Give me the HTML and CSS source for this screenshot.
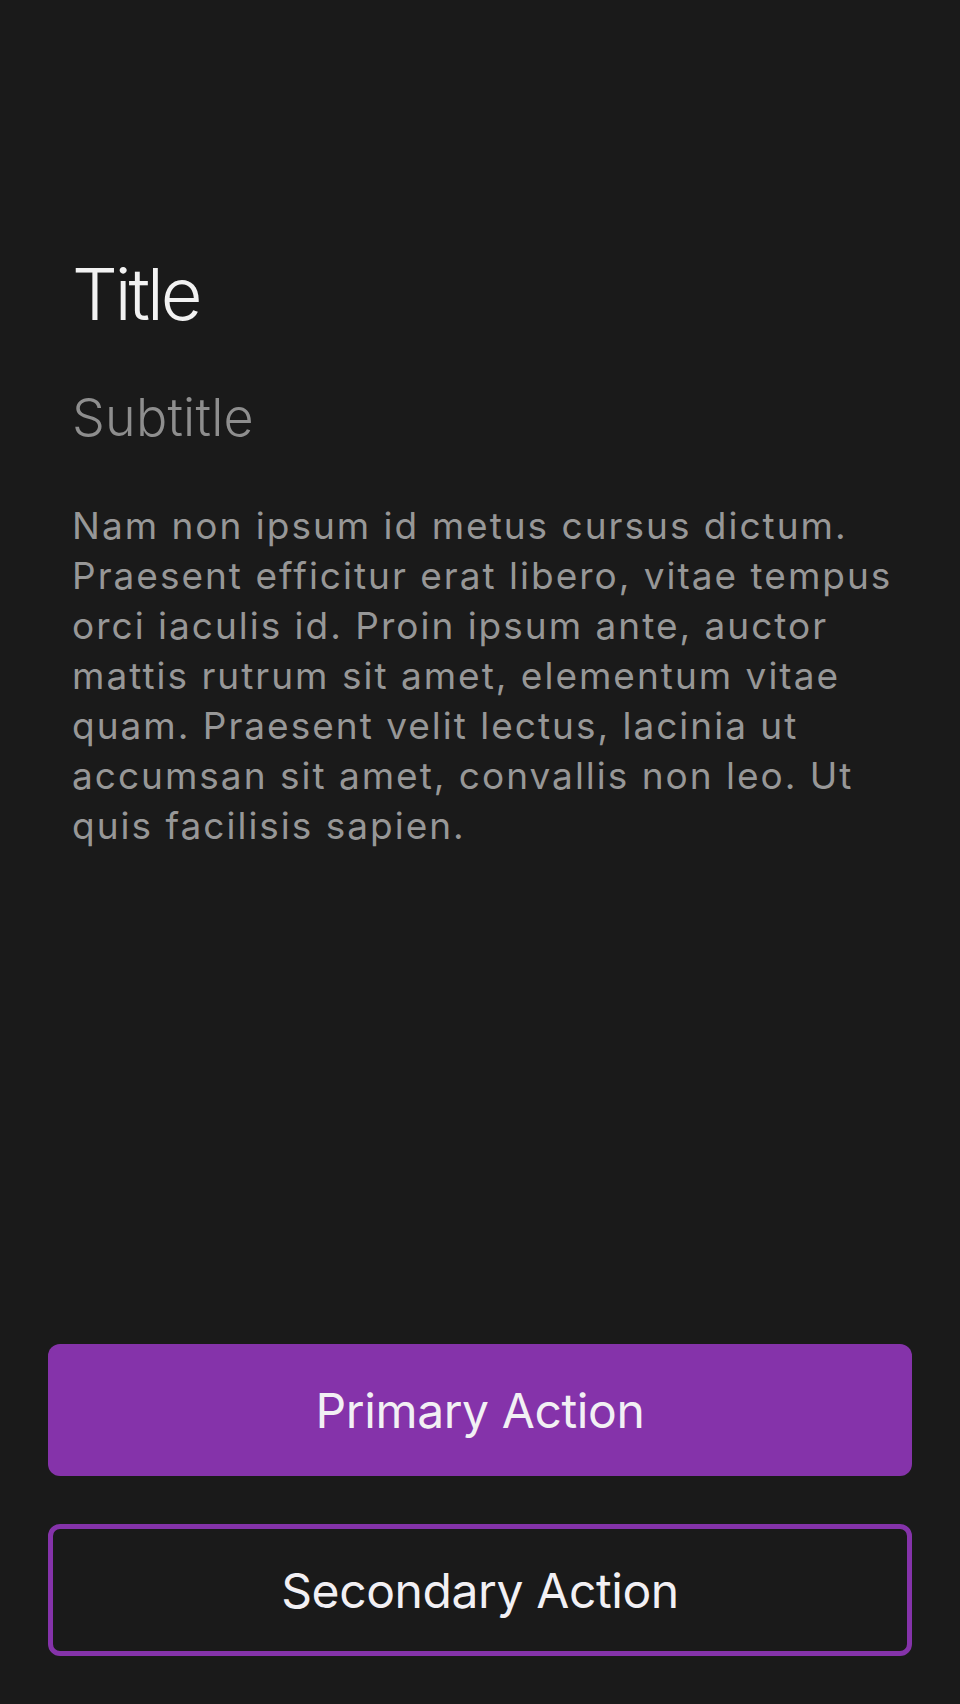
FILE: index.html
```html
<!DOCTYPE html>
<html lang="en">
<head>
<meta charset="utf-8">
<title>Screen</title>
<link rel="stylesheet" href="styles.css">
</head>
<body>
<main class="screen">
  <section class="content">
    <h1 class="title">Title</h1>
    <h2 class="subtitle">Subtitle</h2>
    <p class="body-text">Nam non ipsum id metus cursus dictum. Praesent efficitur erat libero, vitae tempus orci iaculis id. Proin ipsum ante, auctor mattis rutrum sit amet, elementum vitae quam. Praesent velit lectus, lacinia ut accumsan sit amet, convallis non leo. Ut quis facilisis sapien.</p>
  </section>
  <section class="actions">
    <button class="btn btn-primary" type="button">Primary Action</button>
    <button class="btn btn-secondary" type="button">Secondary Action</button>
  </section>
</main>
</body>
</html>
```

FILE: styles.css
```css
html, body {
  margin: 0;
  padding: 0;
  background: #1a1a1a;
}

body {
  font-family: Inter, "Noto Sans", sans-serif;
  color: #f2f2f2;
}

.screen {
  height: 1704px;
  display: flex;
  flex-direction: column;
  box-sizing: border-box;
  padding: 250px 48px 48px;
}

.content {
  padding: 0 0 0 24px;
  display: flex;
  flex-direction: column;
}

.title {
  margin: 0;
  font-size: 72px;
  line-height: 88px;
  font-weight: 300;
  color: #f2f2f2;
  letter-spacing: -3px;
}

.subtitle {
  margin: 48px 0 0;
  font-size: 52px;
  line-height: 64px;
  font-weight: 300;
  color: #8e8e8e;
  letter-spacing: 0.2px;
}

.body-text {
  margin: 51px 0 0;
  font-size: 37px;
  line-height: 50px;
  color: #979797;
  letter-spacing: 2px;
}

.actions {
  margin-top: auto;
  display: flex;
  flex-direction: column;
  gap: 48px;
}

.btn {
  height: 132px;
  width: 100%;
  border-radius: 12px;
  font-family: Inter, "Noto Sans", sans-serif;
  font-size: 48px;
  font-weight: 400;
  color: #f2f0f4;
  letter-spacing: -0.4px;
  cursor: pointer;
  box-sizing: border-box;
}

.btn-primary {
  background: #8533aa;
  border: none;
}

.btn-secondary {
  background: transparent;
  border: 5px solid #8533aa;
}
```
